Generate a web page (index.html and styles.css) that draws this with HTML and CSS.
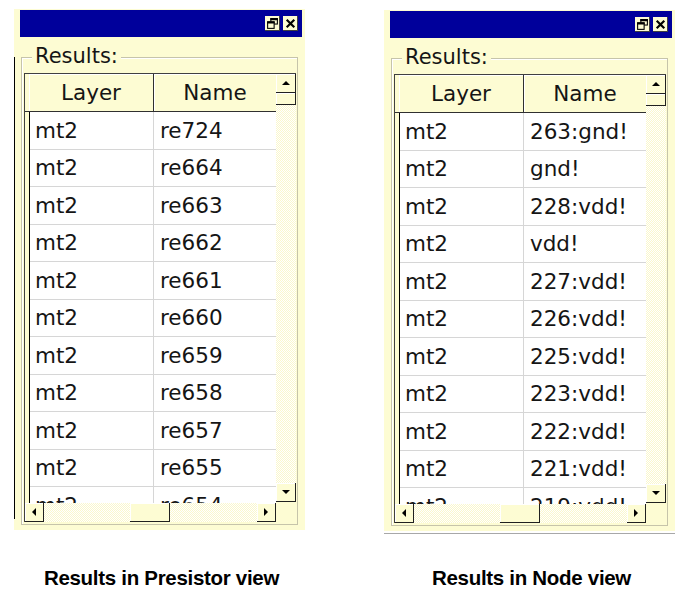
FILE: index.html
```html
<!DOCTYPE html>
<html>
<head>
<meta charset="utf-8">
<link rel="stylesheet" href="styles.css">
</head>
<body>
<div class="page">
  <div class="panels">
    <section class="panel left">
      <div class="titlebar">
        <span class="tbtn"><svg width="13" height="13" viewBox="0 0 12 12"><rect x="4.5" y="1.5" width="6" height="5" fill="none" stroke="#000"/><rect x="4" y="1" width="7" height="2" fill="#000"/><rect x="1.5" y="4.5" width="6" height="6" fill="#fdfcd3" stroke="#000"/><rect x="1" y="4" width="7" height="2" fill="#000"/></svg></span>
        <span class="tbtn"><svg width="13" height="13" viewBox="0 0 12 12"><path d="M2.5 2.5L9.5 9.5M9.5 2.5L2.5 9.5" stroke="#000" stroke-width="2"/></svg></span>
      </div>
      <div class="group">
        <div class="legend">Results:</div>
        <div class="table">
          <div class="main">
            <div class="head"><div class="corner"></div><div class="hcell c1">Layer</div><div class="hcell c2">Name</div></div>
            <div class="body">
              <div class="strip"></div>
              <div class="rows">
                <div class="row"><div class="cell l">mt2</div><div class="cell n">re724</div></div>
                <div class="row"><div class="cell l">mt2</div><div class="cell n">re664</div></div>
                <div class="row"><div class="cell l">mt2</div><div class="cell n">re663</div></div>
                <div class="row"><div class="cell l">mt2</div><div class="cell n">re662</div></div>
                <div class="row"><div class="cell l">mt2</div><div class="cell n">re661</div></div>
                <div class="row"><div class="cell l">mt2</div><div class="cell n">re660</div></div>
                <div class="row"><div class="cell l">mt2</div><div class="cell n">re659</div></div>
                <div class="row"><div class="cell l">mt2</div><div class="cell n">re658</div></div>
                <div class="row"><div class="cell l">mt2</div><div class="cell n">re657</div></div>
                <div class="row"><div class="cell l">mt2</div><div class="cell n">re655</div></div>
                <div class="row"><div class="cell l">mt2</div><div class="cell n">re654</div></div>
              </div>
            </div>
            <div class="hscroll">
              <div class="sbtn"><span class="arr al"></span></div>
              <div class="track t1"></div>
              <div class="sbtn thumb-h"></div>
              <div class="track t2"></div>
              <div class="sbtn"><span class="arr ar"></span></div>
            </div>
          </div>
          <div class="vscroll">
            <div class="sbtn vb"><span class="arr au"></span></div>
            <div class="sbtn thumb-v"></div>
            <div class="track tv"></div>
            <div class="sbtn vb"><span class="arr ad"></span></div>
            <div class="vcorner"></div>
          </div>
        </div>
      </div>
    </section>

    <section class="panel right">
      <div class="titlebar">
        <span class="tbtn"><svg width="13" height="13" viewBox="0 0 12 12"><rect x="4.5" y="1.5" width="6" height="5" fill="none" stroke="#000"/><rect x="4" y="1" width="7" height="2" fill="#000"/><rect x="1.5" y="4.5" width="6" height="6" fill="#fdfcd3" stroke="#000"/><rect x="1" y="4" width="7" height="2" fill="#000"/></svg></span>
        <span class="tbtn"><svg width="13" height="13" viewBox="0 0 12 12"><path d="M2.5 2.5L9.5 9.5M9.5 2.5L2.5 9.5" stroke="#000" stroke-width="2"/></svg></span>
      </div>
      <div class="group">
        <div class="legend">Results:</div>
        <div class="table">
          <div class="main">
            <div class="head"><div class="corner"></div><div class="hcell c1">Layer</div><div class="hcell c2">Name</div></div>
            <div class="body">
              <div class="strip"></div>
              <div class="rows">
                <div class="row"><div class="cell l">mt2</div><div class="cell n">263:gnd!</div></div>
                <div class="row"><div class="cell l">mt2</div><div class="cell n">gnd!</div></div>
                <div class="row"><div class="cell l">mt2</div><div class="cell n">228:vdd!</div></div>
                <div class="row"><div class="cell l">mt2</div><div class="cell n">vdd!</div></div>
                <div class="row"><div class="cell l">mt2</div><div class="cell n">227:vdd!</div></div>
                <div class="row"><div class="cell l">mt2</div><div class="cell n">226:vdd!</div></div>
                <div class="row"><div class="cell l">mt2</div><div class="cell n">225:vdd!</div></div>
                <div class="row"><div class="cell l">mt2</div><div class="cell n">223:vdd!</div></div>
                <div class="row"><div class="cell l">mt2</div><div class="cell n">222:vdd!</div></div>
                <div class="row"><div class="cell l">mt2</div><div class="cell n">221:vdd!</div></div>
                <div class="row"><div class="cell l">mt2</div><div class="cell n">219:vdd!</div></div>
              </div>
            </div>
            <div class="hscroll">
              <div class="sbtn"><span class="arr al"></span></div>
              <div class="track t1"></div>
              <div class="sbtn thumb-h"></div>
              <div class="track t2"></div>
              <div class="sbtn"><span class="arr ar"></span></div>
            </div>
          </div>
          <div class="vscroll">
            <div class="sbtn vb"><span class="arr au"></span></div>
            <div class="sbtn thumb-v"></div>
            <div class="track tv"></div>
            <div class="sbtn vb"><span class="arr ad"></span></div>
            <div class="vcorner"></div>
          </div>
        </div>
      </div>
    </section>
  </div>
  <div class="captions">
    <div class="caption">Results in Presistor view</div>
    <div class="caption">Results in Node view</div>
  </div>
</div>
</body>
</html>
```

FILE: styles.css
```css
* { box-sizing: border-box; }
body {
  margin: 0;
  background: #fff;
  font-family: "DejaVu Sans", sans-serif;
  color: #151515;
}
.page {
  width: 693px;
  height: 614px;
  padding-top: 9px;
  overflow: hidden;
}
.panels {
  display: flex;
  gap: 79px;
  padding-left: 14px;
}
.panel {
  width: 291px;
  height: 521px;
  background: #fdfcd3;
  padding: 1px 0 0 6px;
}
.panel.left {
  background: linear-gradient(#000, #000) 0 48px / 1px 462px no-repeat, #fdfcd3;
}
.panel.right {
  margin-top: 1px;
  box-shadow: 0 2px 0 #fff, 0 3px 0 #a8a8a8;
}
.titlebar {
  width: 282px;
  height: 27px;
  background: #00009b;
  display: flex;
  justify-content: flex-end;
  align-items: center;
  gap: 3px;
  padding-right: 4px;
}
.tbtn {
  width: 15px;
  height: 15px;
  background: #fdfcd3;
  display: flex;
  align-items: center;
  justify-content: center;
  border-right: 1px solid #404040;
  border-bottom: 1px solid #404040;
}
.group {
  margin: 20px 0 0 1px;
  width: 277px;
  border: 1px solid #c6c4aa;
  box-shadow: inset 1px 1px 0 #fff;
  padding: 0 1px 2px 2px;
}
.legend {
  margin: -14px 0 0 8px;
  padding: 0 3px;
  width: max-content;
  background: #fdfcd3;
  font-size: 21px;
  line-height: 24px;
}
.table {
  margin-top: 5px;
  width: 272px;
  height: 449px;
  display: flex;
  border-top: 1px solid #404040;
  border-left: 1px solid #404040;
}
.main {
  width: 251px;
  display: flex;
  flex-direction: column;
}
.head {
  height: 38px;
  flex: none;
  display: flex;
}
.corner {
  width: 4px;
  background: #fdfcd3;
  border-bottom: 1px solid #303030;
}
.hcell {
  display: flex;
  align-items: center;
  justify-content: center;
  background: #fdfcd3;
  border-right: 1px solid #303030;
  border-bottom: 1px solid #303030;
  box-shadow: inset 1px 1px 0 #fff;
  font-size: 21.5px;
}
.c1 { width: 125px; }
.c2 { width: 122px; border-right: none; }
.body {
  flex: 1;
  min-height: 0;
  display: flex;
  overflow: hidden;
}
.strip {
  width: 5px;
  flex: none;
  background: #fdfcd3;
  border-right: 1px solid #000;
}
.rows {
  flex: 1;
  background: #fff;
}
.row {
  height: 37.5px;
  display: flex;
  border-bottom: 1px solid #d6d6d6;
}
.cell {
  display: flex;
  align-items: center;
  font-size: 21.5px;
  white-space: nowrap;
}
.cell.l {
  width: 124px;
  padding-left: 5px;
  border-right: 1px solid #d6d6d6;
}
.cell.n {
  flex: 1;
  padding-left: 6px;
}
.hscroll {
  height: 19px;
  flex: none;
  display: flex;
}
.track {
  background: repeating-conic-gradient(#fbf8cc 0 25%, #ffffff 0 50%) 0 0 / 2px 2px;
}
.t1 { width: 86px; }
.t2 { flex: 1; }
.sbtn {
  width: 19px;
  flex: none;
  background: #fdfcd3;
  border-right: 1px solid #202020;
  border-bottom: 1px solid #202020;
  box-shadow: inset 1px 1px 0 #fff;
  display: flex;
  align-items: center;
  justify-content: center;
}
.thumb-h { width: 40px; }
.vscroll {
  width: 20px;
  display: flex;
  flex-direction: column;
}
.vscroll .sbtn { width: 20px; }
.vb { height: 19px; }
.thumb-v { height: 12px; }
.tv { flex: 1; }
.vcorner {
  height: 20px;
  background: #fdfcd3;
}
.arr {
  width: 0;
  height: 0;
  border: 4px solid transparent;
}
.au { border-bottom-color: #000; border-top-width: 0; }
.ad { border-top-color: #000; border-bottom-width: 0; }
.al { border-right-color: #000; border-left-width: 0; }
.ar { border-left-color: #000; border-right-width: 0; }
.captions {
  display: flex;
  gap: 79px;
  padding-left: 14px;
  margin-top: 36px;
}
.caption {
  width: 291px;
  padding-left: 4px;
  text-align: center;
  font-family: "Liberation Sans", Arial, sans-serif;
  font-weight: bold;
  font-size: 20.5px;
  letter-spacing: -0.3px;
  line-height: 22px;
  color: #000;
}
```
